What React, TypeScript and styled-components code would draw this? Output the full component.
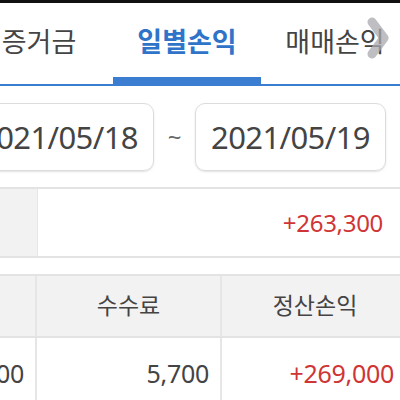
import { createGlobalStyle } from "styled-components";
import styled from "styled-components";

const GlobalStyle = createGlobalStyle`
  html, body {
    margin: 0;
    padding: 0;
    background: #fff;
    overflow: hidden;
  }
  body {
    font-family: "Noto Sans", "Noto Sans CJK KR", sans-serif;
    color: #444;
  }
`;

const Screen = styled.div`
  width: 400px;
  height: 400px;
  overflow: hidden;
  position: relative;
  background: #fff;
`;

const TopStrip = styled.div`
  height: 3px;
  background: #111;
`;

const TabBar = styled.div`
  position: relative;
  display: flex;
  height: 81px;
  margin-left: -35px;
  border-bottom: 2px solid #3b7dd0;
`;

const Tab = styled.div<{ $active?: boolean }>`
  flex: 0 0 148px;
  display: flex;
  align-items: center;
  justify-content: center;
  padding-bottom: 6px;
  box-sizing: border-box;
  font-family: "Noto Sans CJK KR", sans-serif;
  font-size: 27px;
  font-weight: ${(p) => (p.$active ? 700 : 400)};
  color: ${(p) => (p.$active ? "#2f74c9" : "#444")};
  box-shadow: ${(p) => (p.$active ? "inset 0 -7px 0 #3b7dd0" : "none")};
`;

const Chevron = styled.svg`
  position: absolute;
  left: 366px;
  top: 17px;
`;

const DateRow = styled.div`
  display: flex;
  align-items: center;
  height: 101px;
  margin-left: -37px;
  border-bottom: 2px solid #e3e3e3;
`;

const DateBox = styled.div`
  width: 191px;
  height: 68px;
  box-sizing: border-box;
  border: 1px solid #dcdcdc;
  border-radius: 10px;
  box-shadow: 0 1px 2px rgba(0, 0, 0, 0.12);
  display: flex;
  align-items: center;
  justify-content: center;
  font-size: 31px;
  letter-spacing: -0.6px;
  color: #444;
`;

const Tilde = styled.div`
  width: 41px;
  text-align: center;
  font-size: 24px;
  color: #666;
`;

const SummaryRow = styled.div`
  display: flex;
  height: 67px;
  border-bottom: 2px solid #e3e3e3;
`;

const LabelCell = styled.div`
  width: 37px;
  background: #f2f2f2;
  border-right: 1px solid #e6e6e6;
`;

const ValueCell = styled.div<{ $red?: boolean }>`
  flex: 1;
  display: flex;
  align-items: center;
  justify-content: flex-end;
  padding-right: 17px;
  font-size: 24px;
  letter-spacing: -0.3px;
  color: ${(p) => (p.$red ? "#cf3535" : "#444")};
`;

const Gap = styled.div`
  height: 16px;
`;

const Table = styled.div`
  width: 408px;
  border-top: 2px solid #e3e3e3;
`;

const Row = styled.div<{ $head?: boolean }>`
  display: grid;
  grid-template-columns: 37px 185px 186px;
  height: ${(p) => (p.$head ? "60px" : "70px")};
  background: ${(p) => (p.$head ? "#f2f2f2" : "#fff")};
  border-bottom: 2px solid #e3e3e3;
`;

const Cell = styled.div<{ $head?: boolean; $red?: boolean }>`
  display: flex;
  align-items: center;
  justify-content: ${(p) => (p.$head ? "center" : "flex-end")};
  padding: ${(p) => (p.$head ? "0 0 4px" : "0 11px 0 0")};
  border-right: 2px solid #e6e6e6;
  overflow: hidden;
  white-space: nowrap;
  font-family: ${(p) =>
    p.$head ? '"Noto Sans CJK KR", sans-serif' : '"Noto Sans", sans-serif'};
  font-size: ${(p) => (p.$head ? "23px" : "25px")};
  letter-spacing: ${(p) => (p.$head ? "0" : "-0.3px")};
  color: ${(p) => (p.$red ? "#cf3535" : "#444")};
  &:last-child {
    border-right: none;
    padding-right: ${(p) => (p.$head ? "0" : "14px")};
  }
`;

export default function App() {
  return (
    <Screen>
      <GlobalStyle />
      <TopStrip />
      <TabBar>
        <Tab>증거금</Tab>
        <Tab $active>일별손익</Tab>
        <Tab>매매손익</Tab>
      </TabBar>
      <Chevron width="24" height="42" viewBox="0 0 24 42">
        <polyline
          points="6,5 18,21 6,37"
          fill="none"
          stroke="rgba(170,170,175,0.75)"
          strokeWidth="9"
          strokeLinecap="round"
          strokeLinejoin="round"
        />
      </Chevron>
      <DateRow>
        <DateBox>2021/05/18</DateBox>
        <Tilde>~</Tilde>
        <DateBox>2021/05/19</DateBox>
      </DateRow>
      <SummaryRow>
        <LabelCell />
        <ValueCell $red>+263,300</ValueCell>
      </SummaryRow>
      <Gap />
      <Table>
        <Row $head>
          <Cell $head />
          <Cell $head>수수료</Cell>
          <Cell $head>정산손익</Cell>
        </Row>
        <Row>
          <Cell>00</Cell>
          <Cell>5,700</Cell>
          <Cell $red>+269,000</Cell>
        </Row>
      </Table>
    </Screen>
  );
}
